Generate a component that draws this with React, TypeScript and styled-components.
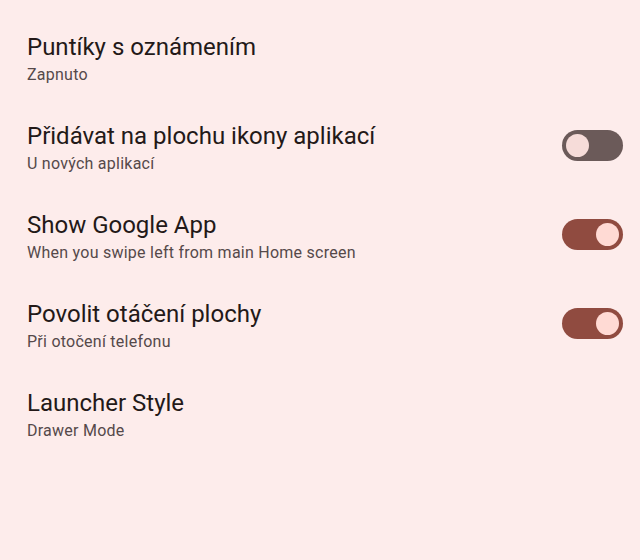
import React from "react";
import styled, { createGlobalStyle } from "styled-components";

const Global = createGlobalStyle`
  html, body { margin: 0; padding: 0; background: #fdeceb; }
  body { font-family: Roboto, "Noto Sans", sans-serif; }
`;

const Page = styled.div`
  width: 640px;
  height: 560px;
  background: #fdeceb;
  padding-top: 14px;
  box-sizing: border-box;
  display: flex;
  flex-direction: column;
`;

const Row = styled.div`
  display: flex;
  align-items: center;
  justify-content: space-between;
  padding: 18px 17px 18px 27px;
`;

const Texts = styled.div`
  display: flex;
  flex-direction: column;
  gap: 3px;
`;

const Title = styled.div`
  font-size: 24px;
  line-height: 30px;
  color: #231918;
`;

const Subtitle = styled.div`
  font-size: 16px;
  line-height: 20px;
  letter-spacing: 0.25px;
  color: #55494a;
`;

const Track = styled.div<{ $on: boolean }>`
  width: 61px;
  height: 31px;
  border-radius: 16px;
  box-sizing: border-box;
  background: ${(p) => (p.$on ? "#904b40" : "#6b5a59")};
  display: flex;
  align-items: center;
  justify-content: ${(p) => (p.$on ? "flex-end" : "flex-start")};
  padding: 0 4px;
  margin-bottom: 5px;
`;

const Thumb = styled.div<{ $on: boolean }>`
  width: 23px;
  height: 23px;
  border-radius: 50%;
  background: ${(p) => (p.$on ? "#ffdad4" : "#f6dcd9")};
`;

const items: { title: string; sub: string; toggle?: boolean }[] = [
  { title: "Puntíky s oznámením", sub: "Zapnuto" },
  { title: "Přidávat na plochu ikony aplikací", sub: "U nových aplikací", toggle: false },
  { title: "Show Google App", sub: "When you swipe left from main Home screen", toggle: true },
  { title: "Povolit otáčení plochy", sub: "Při otočení telefonu", toggle: true },
  { title: "Launcher Style", sub: "Drawer Mode" },
];

export default function App() {
  return (
    <>
      <Global />
      <Page>
        {items.map((it) => (
          <Row key={it.title}>
            <Texts>
              <Title>{it.title}</Title>
              <Subtitle>{it.sub}</Subtitle>
            </Texts>
            {it.toggle !== undefined && (
              <Track $on={it.toggle}>
                <Thumb $on={it.toggle} />
              </Track>
            )}
          </Row>
        ))}
      </Page>
    </>
  );
}
